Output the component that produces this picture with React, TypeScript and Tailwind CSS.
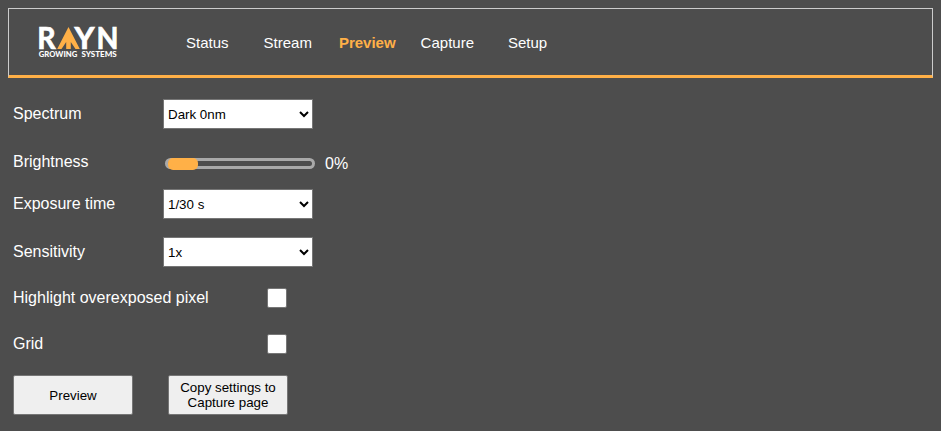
import { useState, type ReactNode } from "react";

const navItems = [
  { label: "Status", space: "ml-[68px]" },
  { label: "Stream", space: "ml-[35px]" },
  { label: "Preview", space: "ml-[27px]" },
  { label: "Capture", space: "ml-[25px]" },
  { label: "Setup", space: "ml-[34px]" },
];

function Logo() {
  return (
    <svg width="80" height="34" viewBox="0 0 80 34" className="ml-[29px] mt-[16px] shrink-0 overflow-visible" aria-label="RAYN Growing Systems">
      <g fill="#fff" stroke="#fff" strokeWidth="0.7" fontFamily="Lato, sans-serif" fontWeight="700" fontSize="29.5">
        <text x="-0.8" y="23.7" textLength="18.4" lengthAdjust="spacingAndGlyphs">R</text>
        <text x="36.5" y="23.7" textLength="20" lengthAdjust="spacingAndGlyphs">Y</text>
        <text x="58.6" y="23.7" textLength="22" lengthAdjust="spacingAndGlyphs">N</text>
      </g>
      <path d="M30.5 2 41.8 24h-4.3l-4.7-7V24h-4.6v-7l-4.7 7h-4.3Z" fill="#ffb047" />
      <g fill="#fff" fontFamily="Lato, sans-serif" fontWeight="900" fontSize="7">
        <text x="0.8" y="32" textLength="38.4" lengthAdjust="spacingAndGlyphs">GROWING</text>
        <text x="43.4" y="32" textLength="35.4" lengthAdjust="spacingAndGlyphs">SYSTEMS</text>
      </g>
    </svg>
  );
}

function Row({ label, className, children }: { label: string; className: string; children: ReactNode }) {
  return (
    <div className={`flex items-center ${className}`}>
      <span className="w-[150px] shrink-0 whitespace-nowrap leading-[18px]">{label}</span>
      {children}
    </div>
  );
}

function Select({ value }: { value: string }) {
  return (
    <select className="h-[30px] w-[150px] border border-[#767676] bg-white text-[13.333px] text-black">
      <option>{value}</option>
    </select>
  );
}

function Check() {
  const [on, setOn] = useState(false);
  return (
    <button
      role="checkbox"
      aria-checked={on}
      onClick={() => setOn(!on)}
      className="ml-[104px] size-5 rounded-[2px] border border-[#767676] bg-white text-sm leading-none text-black"
    >
      {on ? "✓" : ""}
    </button>
  );
}

const buttonClass =
  "h-10 w-[120px] rounded-[2px] border border-[#767676] bg-[#efefef] text-center text-[13.333px] leading-[15px] text-black";

export default function App() {
  return (
    <div className="min-h-screen overflow-hidden bg-[#4d4d4d] p-2 font-['Liberation_Sans',Arial,sans-serif] text-base text-white">
      <header className="flex h-[70px] border border-b-[3px] border-[#ccc] border-b-[#ffb047]">
        <Logo />
        <nav className="flex pt-[25px] text-[15px] leading-[18px]">
          {navItems.map(({ label, space }) => (
            <a key={label} href="#" className={`${space} ${label === "Preview" ? "font-bold text-[#ffb047]" : ""}`}>
              {label}
            </a>
          ))}
        </nav>
      </header>
      <main className="pl-[5px] pt-[21px]">
        <Row label="Spectrum" className="h-[30px]">
          <Select value="Dark 0nm" />
        </Row>
        <Row label="Brightness" className="mt-[18px] h-[30px]">
          <div className="ml-[2px] mt-[3px] h-[11px] w-[150px] rounded-full bg-[#a9a9a9] p-[3px]">
            <div className="flex h-[5px] items-center rounded-full bg-[#4d4d4d]">
              <div className="h-[12px] w-[30px] shrink-0 rounded-[5px] bg-[#ffb047]" />
            </div>
          </div>
          <span className="ml-[10px] mt-[3px] leading-[18px]">0%</span>
        </Row>
        <Row label="Exposure time" className="mt-[12px] h-[30px]">
          <Select value="1/30 s" />
        </Row>
        <Row label="Sensitivity" className="mt-[18px] h-[30px]">
          <Select value="1x" />
        </Row>
        <Row label="Highlight overexposed pixel" className="mt-[21px] h-5">
          <Check />
        </Row>
        <Row label="Grid" className="mt-[26px] h-5">
          <Check />
        </Row>
        <div className="mt-[21px] flex gap-[35px]">
          <button className={buttonClass}>Preview</button>
          <button className={buttonClass}>Copy settings to Capture page</button>
        </div>
      </main>
    </div>
  );
}
